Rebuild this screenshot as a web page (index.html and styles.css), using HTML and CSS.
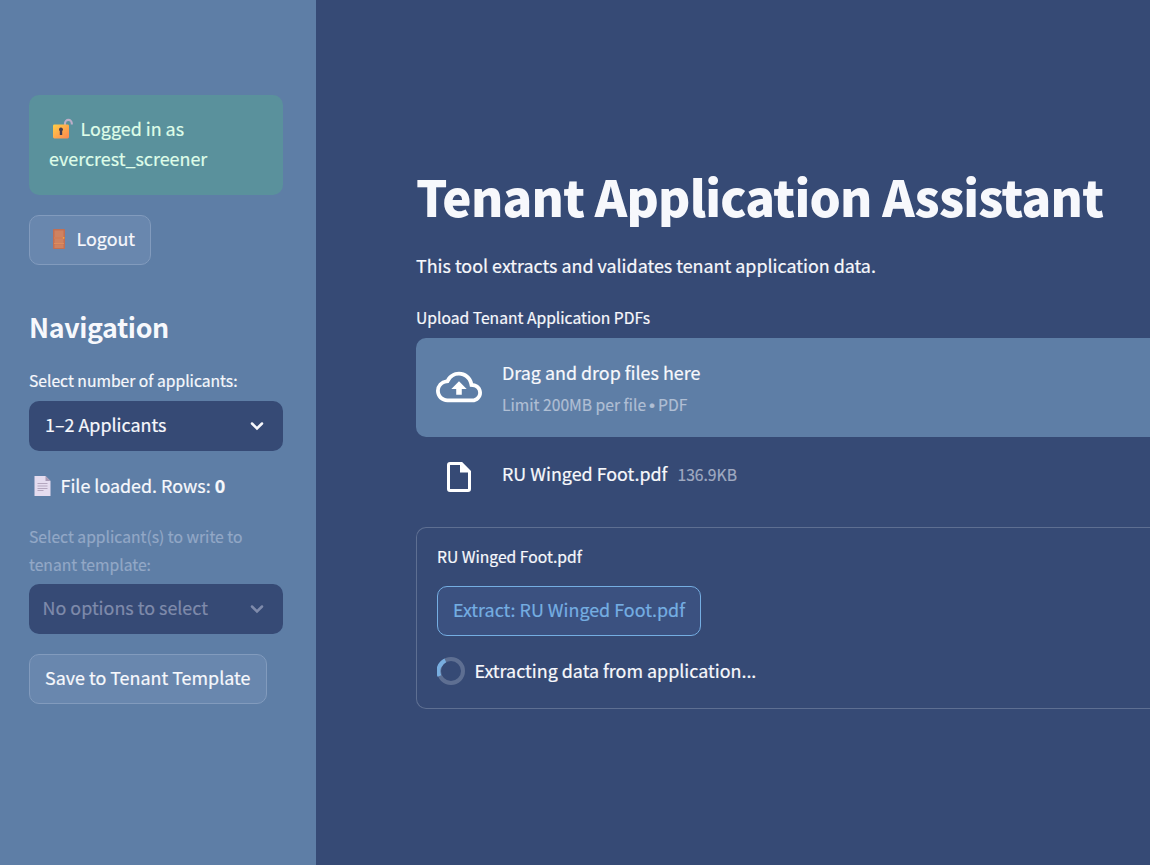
FILE: index.html
```html
<!DOCTYPE html>
<html lang="en">
<head>
<meta charset="utf-8">
<title>Tenant Application Assistant</title>
<link rel="stylesheet" href="styles.css">
</head>
<body>
<div class="app">
  <aside class="sidebar">
    <div class="alert">
      <p class="text"><svg class="emoji lock" width="26" height="22" viewBox="0 0 26 22"><defs><linearGradient id="gold" x1="0" y1="0" x2="1" y2="1"><stop offset="0" stop-color="#ffcf45"/><stop offset="1" stop-color="#ff8650"/></linearGradient></defs><path d="M16 7V5.300a3.400 3.400 0 0 1 6.800 0V6.500" fill="none" stroke="#bcaec8" stroke-width="2.100"/><rect x="4" y="6.400" width="16" height="14" rx="1.400" fill="url(#gold)"/><path d="M10 11.500a2 2 0 1 1 3.200 1.600V17h-2.400v-3.900a2 2 0 0 1-.8-1.600z" fill="#433b50"/></svg>Logged in as<br>evercrest_screener</p>
    </div>
    <button class="button logout"><svg class="emoji door" width="22" height="22" viewBox="0 0 22 22"><rect x="4" y="1" width="12" height="20" rx=".8" fill="#c26f52"/><path d="M5.500 2.500h9v6.500h-9zM5.500 11h9v4h-9zM5.500 16.300h9V20h-9z" fill="#cf8260"/><path d="M5 10h10M5 15.500h10" stroke="#e08c5c" stroke-width="1"/><circle cx="14.600" cy="9.800" r=".9" fill="#f4a63e"/></svg><span class="text">Logout</span></button>
    <h2 class="heading">Navigation</h2>
    <label class="label">Select number of applicants:</label>
    <div class="select"><span class="text">1–2 Applicants</span><svg width="14" height="10" viewBox="0 0 14 10"><path d="M2 2.500l5 5 5-5" fill="none" stroke="currentColor" stroke-width="2.500" stroke-linecap="round"/></svg></div>
    <p class="text loaded"><svg class="emoji page" width="26" height="22" viewBox="0 0 26 22"><path d="M.500 1h11l5 5V21H.500z" fill="#e5dcef"/><path d="M11.500 1v5h5z" fill="#a89ab5"/><path d="M3.500 8.500h10M3.500 11h10M3.500 13.500h10M3.500 15.500h6" stroke="#b5a7bf" stroke-width="1"/></svg>File loaded. Rows: <b>0</b></p>
    <label class="label muted">Select applicant(s) to write to<br>tenant template:</label>
    <div class="select disabled"><span class="text">No options to select</span><svg width="14" height="10" viewBox="0 0 14 10"><path d="M2 2.500l5 5 5-5" fill="none" stroke="currentColor" stroke-width="2.500" stroke-linecap="round"/></svg></div>
    <button class="button save"><span class="text">Save to Tenant Template</span></button>
  </aside>
  <main class="main">
    <h1 class="title">Tenant Application Assistant</h1>
    <p class="text intro">This tool extracts and validates tenant application data.</p>
    <label class="label upload-label">Upload Tenant Application PDFs</label>
    <section class="dropzone">
      <svg width="46" height="46" viewBox="0 0 24 24" fill="#fff"><path d="M19.350 10.040A7.490 7.490 0 0 0 12 4C9.110 4 6.600 5.640 5.350 8.040A5.994 5.994 0 0 0 0 14c0 3.310 2.690 6 6 6h13c2.760 0 5-2.240 5-5 0-2.640-2.050-4.780-4.650-4.960zM19 18H6c-2.210 0-4-1.790-4-4 0-2.050 1.530-3.760 3.560-3.970l1.070-.110.500-.950A5.469 5.469 0 0 1 12 6c2.620 0 4.880 1.860 5.390 4.430l.300 1.500 1.530.110A2.980 2.980 0 0 1 22 15c0 1.650-1.350 3-3 3zM8 13h2.550v3h2.900v-3H16l-4-4z"/></svg>
      <div class="drop-copy"><p class="text">Drag and drop files here</p><p class="label hint">Limit 200MB per file<span class="bullet">•</span>PDF</p></div>
    </section>
    <div class="file">
      <svg width="24" height="30" viewBox="0 0 24 30"><path d="M1.500 3Q1.500 1.500 3 1.500H14.500L22.500 9.500V27Q22.500 28.500 21 28.500H3Q1.500 28.500 1.500 27Z" fill="none" stroke="#fff" stroke-width="3"/><path d="M13 1.500V10.500H22.500Z" fill="#fff"/></svg>
      <span class="text">RU Winged Foot.pdf</span><span class="label size">136.9KB</span>
    </div>
    <section class="card">
      <p class="label">RU Winged Foot.pdf</p>
      <button class="button extract"><span class="text">Extract: RU Winged Foot.pdf</span></button>
      <div class="progress"><svg width="28" height="28" viewBox="0 0 28 28" fill="none" stroke-width="4"><circle cx="14" cy="14" r="12" stroke="#5e6f92"/><path d="M2.400 19A12 12 0 0 1 8.300 3.400" stroke="#78aee0"/></svg><span class="text">Extracting data from application...</span></div>
    </section>
  </main>
</div>
</body>
</html>
```
FILE: styles.css
```css
* { box-sizing: border-box; }
body { margin: 0; background: #364a75; color: #f7f8fc; font-family: "Noto Sans CJK SC", "Noto Sans", sans-serif; overflow: hidden; }
h1, h2, p { margin: 0; }
.app { display: flex; height: 865px; }
.sidebar { flex: 0 0 316px; display: flex; flex-direction: column; align-items: flex-start; padding: 95px 33px 0 29px; background: #5e7ea6; }
.text { font-size: 17.9px; line-height: 30px; white-space: nowrap; -webkit-text-stroke: .2px currentColor; }
.label { display: block; font-size: 15.66px; line-height: 28px; white-space: nowrap; -webkit-text-stroke: .2px currentColor; }
.emoji { display: inline-block; flex: none; vertical-align: -4px; }
.alert { width: 254px; height: 100px; padding: 18px 20px; border-radius: 10px; background: #5a919c; color: #dffde9; }
.lock { margin-right: 5.5px; }
.button { display: flex; align-items: center; height: 50px; padding: 0 15px 4px; border: 1px solid #829bbd; border-radius: 10px; background: #6987ae; color: #f7f8fc; font-family: inherit; }
.logout { width: 122px; margin-top: 20px; }
.door { margin: 2px 5.5px 0 4px; }
.page { margin-right: .5px; }
.heading { margin-top: 44px; font-size: 26.8px; font-weight: 700; line-height: 36px; letter-spacing: -.38px; }
.heading + .label { margin-top: 22px; }
.select { display: flex; align-items: center; justify-content: space-between; width: 254px; height: 50px; margin-top: 6px; padding: 0 19px 4px 16px; border-radius: 10px; background: #364a75; }
.select svg { margin-top: 4px; }
.loaded { margin: 19px 0 23px 5px; }
.muted { color: #93a8c6; }
.muted + .select { margin-top: 5px; }
.disabled { padding-left: 13.5px; color: #7f8bab; }
.save { width: 238px; margin-top: 20px; }
.main { flex: 1; min-width: 0; padding: 163px 0 0 100px; }
.title { font-size: 49.2px; font-weight: 900; line-height: 66px; letter-spacing: -.76px; white-space: nowrap; }
.intro { margin-top: 21px; }
.upload-label { margin-top: 24px; }
.dropzone { display: flex; align-items: center; gap: 20px; height: 99px; margin-top: 6px; padding: 0 20px; border-radius: 10px 0 0 10px; background: #5e7ea6; }
.dropzone svg { margin-bottom: 1px; }
.drop-copy { padding-top: 1px; }
.hint { margin-top: 4px; color: #b0bfd4; }
.bullet { display: inline-block; width: 12px; text-align: center; font-family: "Liberation Sans", sans-serif; font-size: 17px; line-height: 1; }
.file { display: flex; align-items: center; height: 50px; margin-top: 12px; padding: 0 31px; }
.file svg { margin-top: 6px; }
.file .text { margin: -2px 10px 0 31px; }
.size { margin-top: 2px; color: #a0aac1; }
.card { height: 182px; margin-top: 28px; padding: 15px 20px; border: 1px solid #5e6f92; border-right: 0; border-radius: 10px 0 0 10px; }
.extract { width: 264px; margin-top: 15px; border-color: #75aee2; background: #3b5180; color: #75aee2; }
.progress { display: flex; align-items: center; gap: 9.5px; margin-top: 19px; }
.progress svg { margin-top: 2px; }
```
